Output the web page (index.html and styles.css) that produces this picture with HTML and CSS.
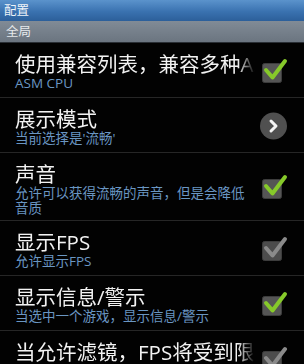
FILE: index.html
```html
<!DOCTYPE html>
<html>
<head>
<meta charset="utf-8">
<link rel="stylesheet" href="styles.css">
</head>
<body>
<div class="screen">
  <div class="titlebar">配置</div>
  <div class="section">全局</div>

  <div class="row">
    <div class="text">
      <div class="title">使用兼容列表，兼容多种ASM CPU</div>
      <div class="sub">ASM CPU</div>
    </div>
    <div class="widget">
      <svg class="check on" width="28" height="28" viewBox="0 0 28 28"><rect x="2.5" y="6.5" width="19" height="19" rx="2"/><path d="M6 13 L12.5 20.5 L25 4"/></svg>
    </div>
  </div>

  <div class="row">
    <div class="text">
      <div class="title">展示模式</div>
      <div class="sub">当前选择是'流畅'</div>
    </div>
    <div class="widget">
      <svg class="arrow" width="28" height="28" viewBox="0 0 28 28"><circle cx="13.5" cy="14" r="13.5"/><path d="M11 9 L16 14 L11 19"/></svg>
    </div>
  </div>

  <div class="row">
    <div class="text">
      <div class="title">声音</div>
      <div class="sub">允许可以获得流畅的声音，但是会降低音质</div>
    </div>
    <div class="widget">
      <svg class="check on" width="28" height="28" viewBox="0 0 28 28"><rect x="2.5" y="6.5" width="19" height="19" rx="2"/><path d="M6 13 L12.5 20.5 L25 4"/></svg>
    </div>
  </div>

  <div class="row">
    <div class="text">
      <div class="title">显示FPS</div>
      <div class="sub">允许显示FPS</div>
    </div>
    <div class="widget">
      <svg class="check off" width="28" height="28" viewBox="0 0 28 28"><rect x="2.5" y="6.5" width="19" height="19" rx="2"/><path d="M6 13 L12.5 20.5 L25 4"/></svg>
    </div>
  </div>

  <div class="row">
    <div class="text">
      <div class="title">显示信息/警示</div>
      <div class="sub">当选中一个游戏，显示信息/警示</div>
    </div>
    <div class="widget">
      <svg class="check on" width="28" height="28" viewBox="0 0 28 28"><rect x="2.5" y="6.5" width="19" height="19" rx="2"/><path d="M6 13 L12.5 20.5 L25 4"/></svg>
    </div>
  </div>

  <div class="row">
    <div class="text">
      <div class="title">当允许滤镜，FPS将受到限制</div>
      <div class="sub">滤镜</div>
    </div>
    <div class="widget">
      <svg class="check off" width="28" height="28" viewBox="0 0 28 28"><rect x="2.5" y="6.5" width="19" height="19" rx="2"/><path d="M6 13 L12.5 20.5 L25 4"/></svg>
    </div>
  </div>
</div>
</body>
</html>
```

FILE: styles.css
```css
html, body {
  margin: 0;
  padding: 0;
  background: #000;
}
.screen {
  width: 304px;
  height: 364px;
  overflow: hidden;
  background: #020202;
  font-family: "Open Sans", "Noto Sans CJK SC", sans-serif;
}
.titlebar {
  height: 21px;
  line-height: 21px;
  padding-left: 4px;
  font-size: 12.5px;
  color: #eef3f8;
  background: linear-gradient(#5b93cc, #3a72b0 55%, #2c5f9a);
  box-sizing: border-box;
}
.section {
  height: 22px;
  line-height: 21px;
  padding-left: 6px;
  font-size: 12.5px;
  color: #e6e9ec;
  background: linear-gradient(#818b96, #6b7580);
  border-bottom: 1px solid #2a2f35;
  box-sizing: border-box;
}
.row {
  display: flex;
  align-items: center;
  min-height: 55px;
  box-sizing: border-box;
  padding: 9px 16px 4px 15px;
  border-bottom: 1px solid #262626;
}
.text {
  flex: 1;
  min-width: 0;
  align-self: flex-start;
}
.title {
  font-size: 20.5px;
  line-height: 24px;
  color: #f2f2f2;
  white-space: nowrap;
  overflow: hidden;
  -webkit-mask-image: linear-gradient(to right, #000 calc(100% - 20px), transparent calc(100% - 3px));
  mask-image: linear-gradient(to right, #000 calc(100% - 20px), transparent calc(100% - 3px));
}
.sub {
  font-size: 13.5px;
  line-height: 15px;
  color: #6a96c2;
  margin-right: 6px;
}
.widget {
  width: 30px;
  display: flex;
  justify-content: flex-end;
  margin-top: -4px;
}
.check rect {
  fill: #555;
  stroke: #3c3c3c;
  stroke-width: 1;
}
.check path {
  fill: none;
  stroke-width: 4;
  stroke-linecap: round;
  stroke-linejoin: round;
}
.check.on path {
  stroke: #86c92a;
}
.check.off rect {
  fill: #4c4c4c;
}
.check.off path {
  stroke: #8a8a8a;
}
.arrow circle {
  fill: #505050;
}
.arrow path {
  fill: none;
  stroke: #f4f4f4;
  stroke-width: 3;
  stroke-linecap: round;
  stroke-linejoin: round;
}
```
